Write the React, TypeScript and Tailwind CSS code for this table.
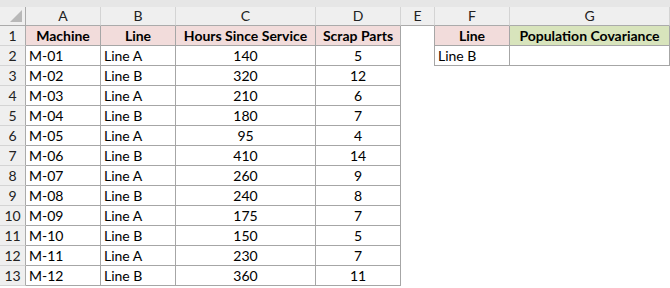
import React from "react";

type Row = { m: string; line: string; hours: number; scrap: number };

const rows: Row[] = [
  { m: "M-01", line: "Line A", hours: 140, scrap: 5 },
  { m: "M-02", line: "Line B", hours: 320, scrap: 12 },
  { m: "M-03", line: "Line A", hours: 210, scrap: 6 },
  { m: "M-04", line: "Line B", hours: 180, scrap: 7 },
  { m: "M-05", line: "Line A", hours: 95, scrap: 4 },
  { m: "M-06", line: "Line B", hours: 410, scrap: 14 },
  { m: "M-07", line: "Line A", hours: 260, scrap: 9 },
  { m: "M-08", line: "Line B", hours: 240, scrap: 8 },
  { m: "M-09", line: "Line A", hours: 175, scrap: 7 },
  { m: "M-10", line: "Line B", hours: 150, scrap: 5 },
  { m: "M-11", line: "Line A", hours: 230, scrap: 7 },
  { m: "M-12", line: "Line B", hours: 360, scrap: 11 },
];

const cols = ["A", "B", "C", "D", "E", "F", "G"];

const cell = "h-5 flex items-center leading-[18px] border-r border-b border-[#a6a6a6] whitespace-nowrap";
const head = "h-5 bg-[#efefef] border-r border-b border-r-[#ababab] border-b-[#d4d4d4] flex items-center justify-center leading-[18px] text-[#222]";
const blank = "h-5";

export default function App() {
  return (
    <div
      className="w-[670px] h-[288px] bg-white overflow-hidden text-[14px] text-black"
      style={{ fontFamily: "Lato, 'Open Sans', sans-serif" }}
    >
      <div className="h-[7px] bg-[#e6e6e6]" />
      <div className="grid grid-cols-[26px_75px_75px_140px_85px_34px_75px_160px_1fr]">
        {/* column headers */}
        <div className="h-[19px] bg-[#efefef] border-r border-b border-[#ababab] relative">
          <svg className="absolute right-[3px] bottom-[3px]" width="12" height="12" viewBox="0 0 12 12">
            <polygon points="12,0 12,12 0,12" fill="#b8b8b8" />
          </svg>
        </div>
        {cols.map((c) => (
          <div
            key={c}
            className="h-[19px] bg-[#efefef] border-r border-b border-r-[#d4d4d4] border-b-[#ababab] flex items-center justify-center leading-[18px] text-[#222]"
          >
            {c}
          </div>
        ))}
        <div className="h-[19px] bg-[#efefef] border-b border-[#ababab]" />

        {/* row 1 */}
        <div className={head}>1</div>
        <div className={`${cell} bg-[#f2dcdb] justify-center font-bold`}>Machine</div>
        <div className={`${cell} bg-[#f2dcdb] justify-center font-bold`}>Line</div>
        <div className={`${cell} bg-[#f2dcdb] justify-center font-bold`}>Hours Since Service</div>
        <div className={`${cell} bg-[#f2dcdb] justify-center font-bold`}>Scrap Parts</div>
        <div className="h-5 border-r border-[#a6a6a6]" />
        <div className={`${cell} bg-[#f2dcdb] justify-center font-bold`}>Line</div>
        <div className={`${cell} bg-[#d8e4bc] justify-center font-bold`}>Population Covariance</div>
        <div className={blank} />

        {rows.map((r, i) => (
          <React.Fragment key={r.m}>
            <div className={head}>{i + 2}</div>
            <div className={`${cell} pl-[3px]`}>{r.m}</div>
            <div className={`${cell} pl-[3px]`}>{r.line}</div>
            <div className={`${cell} justify-center`}>{r.hours}</div>
            <div className={`${cell} justify-center`}>{r.scrap}</div>
            {i === 0 ? (
              <>
                <div className="h-5 border-r border-[#a6a6a6]" />
                <div className={`${cell} pl-[3px]`}>Line B</div>
                <div className={cell} />
              </>
            ) : (
              <>
                <div className={blank} />
                <div className={blank} />
                <div className={blank} />
              </>
            )}
            <div className={blank} />
          </React.Fragment>
        ))}
      </div>
    </div>
  );
}
